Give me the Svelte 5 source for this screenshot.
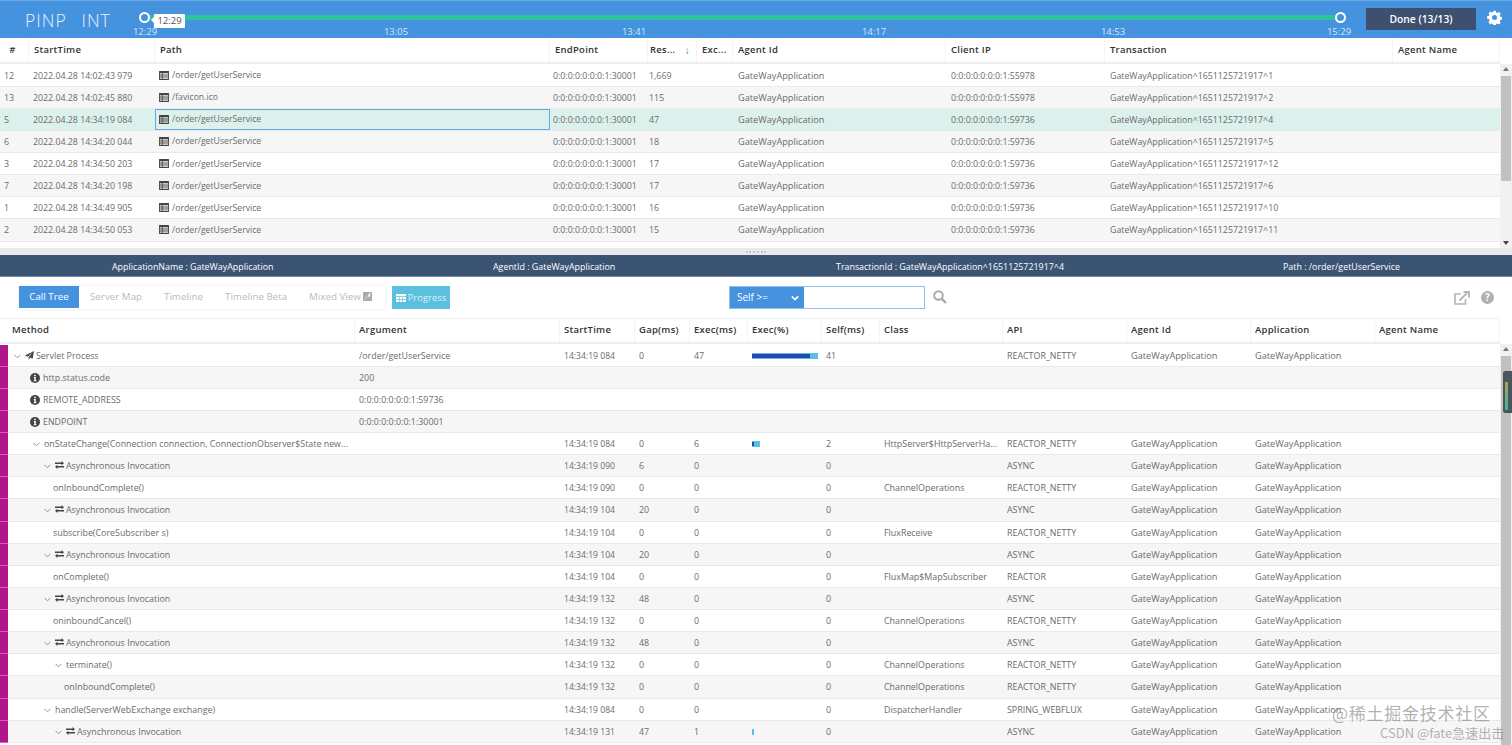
<script>
  const ticks = [['12:29',145],['13:05',396],['13:41',634],['14:17',874],['14:53',1113],['15:29',1339]];
  const topHead = ['#','StartTime','Path','EndPoint','Res...','Exc...','Agent Id','Client IP','Transaction','Agent Name'];
  const T = 'GateWayApplication^1651125721917^';
  const topRows = [
    ['12','2022.04.28 14:02:43 979','/order/getUserService','1,669','0:0:0:0:0:0:0:1:55978','1'],
    ['13','2022.04.28 14:02:45 880','/favicon.ico','115','0:0:0:0:0:0:0:1:55978','2'],
    ['5','2022.04.28 14:34:19 084','/order/getUserService','47','0:0:0:0:0:0:0:1:59736','4'],
    ['6','2022.04.28 14:34:20 044','/order/getUserService','18','0:0:0:0:0:0:0:1:59736','5'],
    ['3','2022.04.28 14:34:50 203','/order/getUserService','17','0:0:0:0:0:0:0:1:59736','12'],
    ['7','2022.04.28 14:34:20 198','/order/getUserService','17','0:0:0:0:0:0:0:1:59736','6'],
    ['1','2022.04.28 14:34:49 905','/order/getUserService','16','0:0:0:0:0:0:0:1:59736','10'],
    ['2','2022.04.28 14:34:50 053','/order/getUserService','15','0:0:0:0:0:0:0:1:59736','11']
  ];
  const botHead = ['Method','Argument','StartTime','Gap(ms)','Exec(ms)','Exec(%)','Self(ms)','Class','API','Agent Id','Application','Agent Name'];
  const tabs = ['Server Map','Timeline','Timeline Beta'];
  const R = 'REACTOR_NETTY';
  const AS = 'Asynchronous Invocation';
  const COL = 'ChannelOperations';
  const calls = [
    {x:36,chev:1,icon:'send',t:'Servlet Process',arg:'/order/getUserService',time:'14:34:19 084',gap:'0',exec:'47',bar:[66,58],self:'41',cls:'',api:R},
    {x:43,icon:'info',t:'http.status.code',arg:'200'},
    {x:43,icon:'info',t:'REMOTE_ADDRESS',arg:'0:0:0:0:0:0:0:1:59736'},
    {x:43,icon:'info',t:'ENDPOINT',arg:'0:0:0:0:0:0:0:1:30001'},
    {x:44,chev:1,t:'onStateChange(Connection connection, ConnectionObserver$State new...',time:'14:34:19 084',gap:'0',exec:'6',bar:[8,2],self:'2',cls:'HttpServer$HttpServerHa...',api:R},
    {x:66,chev:1,icon:'swap',t:AS,time:'14:34:19 090',gap:'6',exec:'0',self:'0',api:'ASYNC'},
    {x:53,t:'onInboundComplete()',time:'14:34:19 090',gap:'0',exec:'0',self:'0',cls:COL,api:R},
    {x:66,chev:1,icon:'swap',t:AS,time:'14:34:19 104',gap:'20',exec:'0',self:'0',api:'ASYNC'},
    {x:53,t:'subscribe(CoreSubscriber s)',time:'14:34:19 104',gap:'0',exec:'0',self:'0',cls:'FluxReceive',api:R},
    {x:66,chev:1,icon:'swap',t:AS,time:'14:34:19 104',gap:'20',exec:'0',self:'0',api:'ASYNC'},
    {x:53,t:'onComplete()',time:'14:34:19 104',gap:'0',exec:'0',self:'0',cls:'FluxMap$MapSubscriber',api:'REACTOR'},
    {x:66,chev:1,icon:'swap',t:AS,time:'14:34:19 132',gap:'48',exec:'0',self:'0',api:'ASYNC'},
    {x:53,t:'oninboundCancel()',time:'14:34:19 132',gap:'0',exec:'0',self:'0',cls:COL,api:R},
    {x:66,chev:1,icon:'swap',t:AS,time:'14:34:19 132',gap:'48',exec:'0',self:'0',api:'ASYNC'},
    {x:66,chev:1,t:'terminate()',time:'14:34:19 132',gap:'0',exec:'0',self:'0',cls:COL,api:R},
    {x:64,t:'onInboundComplete()',time:'14:34:19 132',gap:'0',exec:'0',self:'0',cls:COL,api:R},
    {x:55,chev:1,t:'handle(ServerWebExchange exchange)',time:'14:34:19 084',gap:'0',exec:'0',self:'0',cls:'DispatcherHandler',api:'SPRING_WEBFLUX'},
    {x:77,chev:1,icon:'swap',t:AS,time:'14:34:19 131',gap:'47',exec:'1',bar:[2,0],self:'0',api:'ASYNC'}
  ];
</script>

<div class="page">
  <header class="top">
    <div class="logo">PINP<span class="logo-o">O</span>INT</div>
    <div class="slider">
      <div class="track"></div>
      <span class="handle handle-l"></span>
      <span class="handle handle-r"></span>
      <span class="tip">12:29</span>
      {#each ticks as [label, x]}
        <span class="tick" style="left:{x - 124}px">{label}</span>
      {/each}
    </div>
    <button class="done">Done (13/13)</button>
    <svg class="gear" viewBox="0 0 24 24" width="15" height="15"><path fill="#fff" fill-rule="evenodd" d="M10 1h4l.6 3 2 .9 2.6-1.7 2.8 2.8-1.7 2.6.9 2 3 .6v4l-3 .6-.9 2 1.7 2.6-2.8 2.8-2.6-1.7-2 .9-.6 3h-4l-.6-3-2-.9-2.6 1.7L2.4 19l1.7-2.6-.9-2-3-.6v-4l3-.6.9-2L2.400 5l2.800-2.800 2.600 1.700 2-.9zM12 8a4 4 0 1 0 0 8 4 4 0 0 0 0-8z"/></svg>
  </header>

  <section class="upper">
    <div class="grid-top head thead">
      {#each topHead as h, i}
        <div class="hc" class:center={i === 0}>{h}{#if i === 4}<span class="sort">↓</span>{/if}</div>
      {/each}
    </div>
    <div class="body-wrap top-body">
      <div class="rows">
        {#each topRows as r, i}
          <div class="grid-top row" class:alt={i % 2 === 1} class:sel={i === 2}>
            <div class="c">{r[0]}</div>
            <div class="c num">{r[1]}</div>
            <div class="c path" class:focus={i === 2}>
              <svg class="list" viewBox="0 0 11 10" width="10" height="9"><path fill="#444" fill-rule="evenodd" d="M0 0h11v10H0zM1 2.500v1.500h2V2.500zm3 0v1.500h6V2.500zM1 5v1.200h2V5zm3 0v1.200h6V5zM1 7.200v1.300h2V7.200zm3 0v1.300h6V7.200z"/></svg>
              <span>{r[2]}</span>
            </div>
            <div class="c num ep">0:0:0:0:0:0:0:1:30001</div>
            <div class="c res">{r[3]}</div>
            <div class="c"></div>
            <div class="c app r">GateWayApplication</div>
            <div class="c num r">{r[4]}</div>
            <div class="c r tx">{T}{r[5]}</div>
            <div class="c"></div>
          </div>
        {/each}
      </div>
      <div class="sb sb-top"><i class="up"></i><b></b><i class="down"></i></div>
    </div>
    <div class="splitter"><span></span></div>
  </section>

  <div class="infobar">
    <span>ApplicationName : GateWayApplication</span>
    <span>AgentId : GateWayApplication</span>
    <span>TransactionId : GateWayApplication^1651125721917^4</span>
    <span>Path : /order/getUserService</span>
  </div>

  <div class="toolbar">
    <div class="tabs">
      <span class="tab on">Call Tree</span>
      {#each tabs as t}<span class="tab">{t}</span>{/each}
      <span class="tab">Mixed View
        <svg viewBox="0 0 10 10" width="9" height="9"><path fill="#aaa" fill-rule="evenodd" d="M0 0h10v10H0zM1.500 8.500l4-4 1.500 1.500L8.500 1.500H6L7 2.500 3 6.500z"/></svg>
      </span>
    </div>
    <button class="progress">
      <svg viewBox="0 0 10 8" width="10" height="8"><path fill="#fff" d="M0 0h10v2.200H0zM0 2.900h3v2.100H0zM3.600 2.900h2.800v2.100H3.600zM7 2.900h3v2.100H7zM0 5.700h3V8H0zM3.600 5.700h2.800V8H3.600zM7 5.700h3V8H7z"/></svg>
      Progress
    </button>
    <div class="search">
      <div class="sel-box">Self &gt;=
        <svg viewBox="0 0 10 6" width="8" height="6"><path d="M1 1l4 4 4-4" fill="none" stroke="#fff" stroke-width="2"/></svg>
      </div>
      <div class="inp"></div>
    </div>
    <svg class="mag" viewBox="0 0 14 14" width="14" height="14"><circle cx="5.500" cy="5.500" r="4.300" fill="none" stroke="#aaa" stroke-width="2"/><path d="M8.800 8.800L13 13" stroke="#aaa" stroke-width="2.400"/></svg>
    <svg class="ext" viewBox="0 0 16 14" width="16" height="14"><path d="M11.500 8v5H1V3h6" fill="none" stroke="#b4b4b4" stroke-width="1.600"/><path d="M5.500 9.500L13 2M9.500 1H15v5.500" fill="none" stroke="#b4b4b4" stroke-width="1.800"/></svg>
    <span class="help">?</span>
  </div>

  <div class="grid-bot head bhead">
    <div></div>
    {#each botHead as h}<div class="hc">{h}</div>{/each}
  </div>
  <div class="body-wrap bot-body">
    <div class="rows">
      {#each calls as c, i}
        <div class="grid-bot row" class:alt={i % 2 === 1}>
          <div class="mark"></div>
          <div class="c method" style="padding-left:{c.x - 8}px">
            {#if c.chev}
              <svg class="chev" style="left:{c.x - 8 - (c.icon ? 22 : 11)}px" viewBox="0 0 8 5" width="7" height="5"><path d="M.5.500L4 4 7.500.500" fill="none" stroke="#888" stroke-width="1"/></svg>
            {/if}
            {#if c.icon === 'send'}
              <svg class="ic" viewBox="0 0 10 10" width="9" height="9"><path fill="#444" d="M10 0L8.500 8.500 5.800 7.300 4 9.700V7l4.500-5.200L3 6.300 0 5z"/></svg>
            {:else if c.icon === 'info'}
              <svg class="ic info" viewBox="0 0 10 10" width="10" height="10"><circle cx="5" cy="5" r="5" fill="#444"/><path fill="#fff" d="M4.200 1.800h1.600v1.400H4.200zM3.800 4h2v3.200h.6v1H3.700v-1h.6V5h-.5z"/></svg>
            {:else if c.icon === 'swap'}
              <svg class="ic" viewBox="0 0 9 8" width="9" height="8"><path fill="#444" d="M0 1.500h6.500V0L9 2.200 6.500 4.200V3H0zM9 5H2.500V3.800L0 5.800 2.500 8V6.500H9z"/></svg>
            {/if}
            {c.t}
          </div>
          <div class="c">{c.arg ?? ''}</div>
          <div class="c time">{c.time ?? ''}</div>
          <div class="c">{c.gap ?? ''}</div>
          <div class="c ex">{c.exec ?? ''}</div>
          <div class="c">
            {#if c.bar}
              <div class="bar" style="width:{c.bar[0]}px"><div class="bar-in" style="width:{c.bar[1]}px"></div></div>
            {/if}
          </div>
          <div class="c">{c.self ?? ''}</div>
          <div class="c">{c.cls ?? ''}</div>
          <div class="c">{c.api ?? ''}</div>
          <div class="c app">{c.api ? 'GateWayApplication' : ''}</div>
          <div class="c app">{c.api ? 'GateWayApplication' : ''}</div>
          <div class="c"></div>
        </div>
      {/each}
    </div>
    <div class="sb sb-bot"><i class="up"></i><b></b></div>
    <div class="mini"><span></span></div>
  </div>

  <div class="wm wm1">@稀土掘金技术社区</div>
  <div class="wm wm2">CSDN @fate急速出击</div>
</div>

<style>
  :global(body) { margin: 0; overflow: hidden; background: #fff; }
  .page {
    position: relative; width: 1512px; height: 745px; overflow: hidden;
    font-family: "Open Sans", "Noto Sans", sans-serif; font-size: 8.9px; color: #6b6b6b;
    display: flex; flex-direction: column;
  }
  .top {
    height: 38px; box-sizing: border-box; flex: none; display: flex; align-items: flex-start;
    background: #4592de; border-top: 1px solid #6aa8e6; color: #fff;
  }
  .logo { width: 124px; padding: 9px 0 0 25px; box-sizing: border-box; font-size: 17.500px; font-weight: 300; letter-spacing: 1.100px; line-height: 20px; color: #eaf3fc; white-space: nowrap; }
  .logo-o { color: #3a9bea; }
  .slider { position: relative; width: 1242px; height: 37px; flex: none; }
  .track { position: absolute; left: 24px; right: 24px; top: 14px; height: 5px; background: #2dc39c; }
  .handle { position: absolute; top: 11px; width: 7px; height: 7px; border-radius: 50%; border: 2.500px solid #fff; background: #4592de; }
  .handle-l { left: 15px; }
  .handle-r { left: 1211px; }
  .tip { position: absolute; left: 30px; top: 13px; width: 31px; height: 14px; background: #fff; color: #555; font-size: 9.500px; line-height: 13px; text-align: center; border-radius: 1px; }
  .tip::before { content: ""; position: absolute; left: -3px; top: 3px; border: 3px solid transparent; border-left: 0; border-right-color: #fff; }
  .tick { position: absolute; top: 24px; transform: translateX(-50%); font-size: 9.500px; line-height: 13px; color: #d4e6f8; }
  .done { width: 110px; height: 22px; margin-top: 7px; flex: none; background: #3d5070; border: 0; border-radius: 1px; color: #fff; font: 600 10.300px "Open Sans", sans-serif; padding: 0; }
  .gear { margin: 9px 0 0 11px; flex: none; }

  .upper { flex: none; height: 217px; display: flex; flex-direction: column; background: #fff; }
  .grid-top { display: grid; grid-template-columns: 29px 126px 395px 98px 49px 36px 213px 159px 288px 107px; width: 1500px; }
  .grid-bot { display: grid; grid-template-columns: 8px 347px 205px 75px 55px 58px 74px 58px 123px 124px 124px 124px 125px; width: 1500px; }
  .head { box-sizing: border-box; border-bottom: 2px solid #eee; font-weight: 600; color: #333; flex: none; }
  .thead { height: 26px; }
  .thead .hc { line-height: 24px; }
  .hc { padding-left: 5px; font-size: 9.500px; letter-spacing: .25px; border-right: 1px solid #f4f4f4; position: relative; white-space: nowrap; }
  .hc.center { text-align: center; padding: 0 3px 0 0; }
  .thead .hc:nth-child(5) { padding-left: 2px; }
  .thead .hc:nth-child(n+7) { padding-left: 5px; }
  .sort { position: absolute; right: 6px; top: 0; font-weight: 400; color: #777; font-size: 10px; }
  .bhead { border-top: 1px solid #eee; height: 26px; }
  .bhead .hc { padding-left: 4px; line-height: 22px; }
  .body-wrap { position: relative; display: flex; overflow: hidden; }
  .top-body { height: 184px; flex: none; }
  .bot-body { flex: 1; min-height: 0; }
  .rows { width: 1500px; flex: none; padding-top: .5px; }
  .row { height: 22.130px; box-sizing: border-box; border-bottom: 1px solid #e9e9e9; background: #fff; }
  .row.alt { background: #f6f6f6; }
  .row.sel { background: #dcf1ec; }
  .c { line-height: 22px; padding-left: 4px; white-space: nowrap; overflow: hidden; position: relative; box-sizing: border-box; }
  .app { font-size: 9.200px; }
  .num { font-size: 8.800px; }
  .time { font-size: 8.600px; }
  .tx { font-size: 8.800px; }
  .ep { padding-left: 3px; }
  .res { padding-left: 1px; }
  .r { padding-left: 5px; }
  .path { display: flex; align-items: center; gap: 1px; font-size: 8.700px; }
  .path.focus { border: 1px solid #62a9dc; padding-left: 3px; }
  .list { margin-right: 2px; flex: none; }
  .sb { width: 12px; background: #f1f1f1; position: relative; flex: none; }
  .sb b { position: absolute; left: 1px; right: 1px; background: #c1c1c1; }
  .sb-top b { top: 12px; height: 105px; }
  .sb-bot b { top: 12px; bottom: 0; }
  .up, .down { position: absolute; left: 3px; width: 0; height: 0; border: 3px solid transparent; }
  .up { top: 3px; border-top: 0; border-bottom: 4px solid #777; }
  .down { bottom: 3px; border-bottom: 0; border-top: 4px solid #444; }
  .splitter { flex: 1; background: #e9e9e9; display: flex; justify-content: center; }
  .splitter span { width: 20px; height: 1px; margin-top: 3px; border-top: 2px dotted #c8c8c8; }
  .infobar { height: 22px; flex: none; background: #3c5474; color: #fff; display: flex; line-height: 23px; font-size: 8.900px; border-bottom: 1px solid #6f87a3; box-sizing: border-box; white-space: nowrap; padding-left: 112px; }
  .infobar span:nth-child(1) { width: 381px; }
  .infobar span:nth-child(2) { width: 343px; }
  .infobar span:nth-child(3) { width: 447px; }
  .toolbar { height: 41px; flex: none; box-sizing: border-box; display: flex; align-items: flex-start; padding-top: 9px; position: relative; }
  .tabs { margin-left: 19px; width: 366px; height: 23px; display: flex; box-shadow: 0 0 3px #e4e4e4; box-sizing: border-box; }
  .tab { height: 22px; line-height: 22px; font-size: 9.800px; color: #bbb; white-space: nowrap; }
  .tab:nth-child(1) { width: 60px; text-align: center; background: #4592de; color: #fff; }
  .tab:nth-child(2) { margin-left: 11px; width: 74px; }
  .tab:nth-child(3) { width: 61px; }
  .tab:nth-child(4) { width: 84px; }
  .tab:nth-child(5) svg { vertical-align: -1px; }
  .progress { margin-left: 7px; width: 58px; height: 23px; flex: none; padding: 0; border: 0; background: #5bc0de; color: #d9f1f8; font: 9.500px "Open Sans", sans-serif; display: flex; align-items: center; justify-content: center; gap: 2px; }
  .search { margin-left: 279px; width: 196px; height: 23px; display: flex; border: 1px solid #8fc0ea; box-sizing: border-box; flex: none; }
  .sel-box { width: 74px; background: #4592de; color: #fff; font-size: 10px; line-height: 21px; padding-left: 7px; box-sizing: border-box; display: flex; justify-content: space-between; align-items: center; padding-right: 5px; }
  .inp { flex: 1; }
  .mag { margin: 4px 0 0 8px; flex: none; }
  .ext { margin: 5px 0 0 507px; flex: none; }
  .help { margin: 5px 0 0 11px; width: 13px; height: 13px; border-radius: 50%; background: #b0b0b0; color: #fff; font-weight: 700; font-size: 10px; line-height: 13px; text-align: center; flex: none; }
  .mark { background: #b0178c; border-bottom: 1px solid #f4d; margin-bottom: -1px; }
  .chev { position: absolute; top: 9px; }
  .ic { position: absolute; margin-left: -11px; top: 6px; }
  .ic.info { margin-left: -13px; }
  .bar { height: 6px; margin-top: 8px; background: #5bc0de; }
  .bar-in { height: 4px; background: #2746b5; position: relative; top: 1px; }
  .sb-bot { height: 100%; }
  .mini { position: absolute; right: 0; top: 27px; width: 9px; height: 42px; background: #4a5560; border-radius: 2px 0 0 2px; }
  .mini span { position: absolute; left: 2px; top: 11px; width: 3px; height: 28px; background: linear-gradient(#a9a654, #3db39a); }
  .wm { position: absolute; white-space: nowrap; color: rgba(125,125,125,.6); font-family: "Noto Sans CJK SC", "Open Sans", sans-serif; }
  .wm1 { left: 1332px; top: 700px; font-size: 17px; line-height: 25px; letter-spacing: .75px; }
  .wm2 { left: 1380px; top: 725px; font-size: 13px; line-height: 16px; }
</style>
